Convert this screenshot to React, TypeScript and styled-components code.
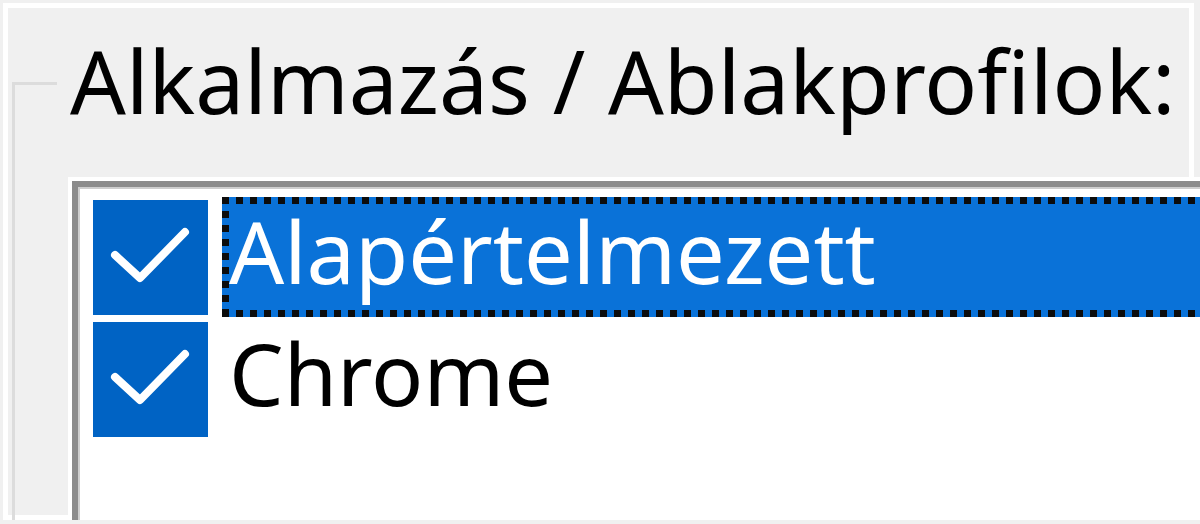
import React from 'react'
import styled, { createGlobalStyle } from 'styled-components'

const GlobalStyle = createGlobalStyle`
  html, body {
    margin: 0;
    padding: 0;
    background: #f0f0f0;
    overflow: hidden;
  }
  body {
    font-family: 'Noto Sans', 'Open Sans', sans-serif;
  }
`

const Frame = styled.div`
  box-sizing: border-box;
  margin: 3px 0 0 3px;
  width: 1191px;
  height: 517px;
  border: 5px solid #fff;
`

const GroupBox = styled.fieldset`
  box-sizing: border-box;
  margin: 12px 0 0 4px;
  padding: 0;
  width: 1300px;
  height: 600px;
  min-width: 0;
  border: 3px solid #dcdcdc;
  border-right: none;
  border-bottom: none;
`

const Title = styled.legend`
  margin-left: 42px;
  padding: 0 120px 6px 13px;
  font-size: 87.5px;
  line-height: 120px;
  color: #000;
  white-space: nowrap;
`

const ListBox = styled.div`
  box-sizing: border-box;
  margin: 35px 0 0 57px;
  width: 1180px;
  height: 400px;
  padding: 9px 0 0 15px;
  background: #fff;
  border: 6px solid #8b8b8b;
  box-shadow: 0 0 0 4px #fff, inset 0 0 0 2px #cdcdcd;
`

const Row = styled.div`
  display: flex;
  align-items: center;
  height: 122px;
`

const Check = styled.div`
  flex: none;
  width: 115px;
  height: 115px;
  background: #0063c4;
  svg {
    display: block;
  }
`

const dots = '#0c0c0c 0 7px, transparent 7px 14px'

const Label = styled.div<{ $selected?: boolean }>`
  box-sizing: border-box;
  flex: 1;
  height: 120px;
  margin-left: 14px;
  padding: 7px 0 12px 7px;
  background: ${p =>
    p.$selected
      ? `repeating-linear-gradient(90deg, ${dots}) top left / 100% 7px no-repeat,
         repeating-linear-gradient(90deg, ${dots}) bottom left / 100% 7px no-repeat,
         repeating-linear-gradient(180deg, ${dots}) top left / 7px 100% no-repeat,
         #0a72d8`
      : 'transparent'};
  color: ${p => (p.$selected ? '#fff' : '#000')};
  font-size: 86.5px;
  line-height: 94px;
  white-space: nowrap;
`

const CheckMark = () => (
  <svg width="115" height="115" viewBox="0 0 115 115">
    <polyline
      points="22,55 47,78 92,32"
      fill="none"
      stroke="#fff"
      strokeWidth="8"
      strokeLinecap="round"
      strokeLinejoin="round"
    />
  </svg>
)

const profiles = [
  { name: 'Alapértelmezett', selected: true },
  { name: 'Chrome', selected: false },
]

const App = () => (
  <>
    <GlobalStyle />
    <Frame>
      <GroupBox>
        <Title>Alkalmazás / Ablakprofilok:</Title>
        <ListBox>
          {profiles.map(p => (
            <Row key={p.name}>
              <Check>
                <CheckMark />
              </Check>
              <Label $selected={p.selected}>{p.name}</Label>
            </Row>
          ))}
        </ListBox>
      </GroupBox>
    </Frame>
  </>
)

export default App
